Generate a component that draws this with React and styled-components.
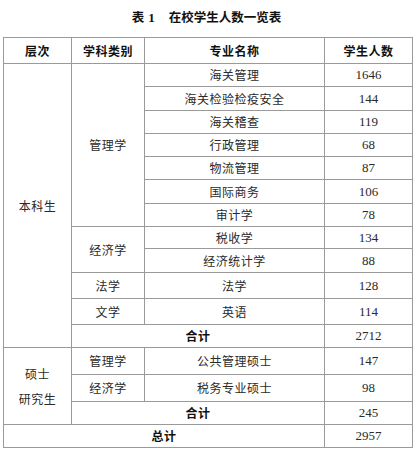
import React from "react";
import styled, { createGlobalStyle } from "styled-components";

const Global = createGlobalStyle`
  html, body { margin: 0; padding: 0; background: #fff; }
  body { font-family: "Noto Sans CJK SC", "Noto Sans", sans-serif; color: #222; }
`;

const Page = styled.div`
  width: 416px;
  padding: 0 0 0 3px;
  box-sizing: border-box;
`;

const Title = styled.div`
  height: 37px;
  line-height: 34px;
  text-align: center;
  font-size: 12.5px;
  font-weight: 700;
  color: #111;
  padding-right: 6px;
  box-sizing: border-box;
`;

const Num1 = styled.span`
  font-family: "Liberation Serif", serif;
  font-weight: 700;
  font-size: 13px;
  margin: 0 14px 0 4px;
`;

const Table = styled.table`
  border-collapse: collapse;
  table-layout: fixed;
  width: 409px;
  border: 1px solid #8c8c8c;
`;

const Row = styled.tr`
  height: ${(p) => p.$h}px;
`;

const Cell = styled.td`
  border: 1px solid #9a9a9a;
  padding: 0;
  text-align: center;
  vertical-align: middle;
  font-size: 12px;
  line-height: ${(p) => (p.$lh ? p.$lh : 14)}px;
  font-weight: ${(p) => (p.$bold ? 700 : 400)};
  color: ${(p) => (p.$bold ? "#111" : "#2a2a2a")};
  letter-spacing: 0.5px;
`;

const NumCell = styled(Cell)`
  font-family: "Liberation Serif", serif;
  font-size: 13px;
  letter-spacing: 0;
`;

const undergrad = [
  ["海关管理", "1646", 23],
  ["海关检验检疫安全", "144", 24],
  ["海关稽查", "119", 23],
  ["行政管理", "68", 23],
  ["物流管理", "87", 23],
  ["国际商务", "106", 24],
  ["审计学", "78", 23],
];

export default function App() {
  return (
    <Page>
      <Global />
      <Title>
        表<Num1>1</Num1>在校学生人数一览表
      </Title>
      <Table>
        <colgroup>
          <col style={{ width: 68 }} />
          <col style={{ width: 73 }} />
          <col style={{ width: 180 }} />
          <col style={{ width: 88 }} />
        </colgroup>
        <tbody>
          <Row $h={26}>
            <Cell $bold>层次</Cell>
            <Cell $bold>学科类别</Cell>
            <Cell $bold>专业名称</Cell>
            <Cell $bold>学生人数</Cell>
          </Row>
          {undergrad.map(([name, n, h], i) => (
            <Row $h={h} key={name}>
              {i === 0 && <Cell rowSpan={12}>本科生</Cell>}
              {i === 0 && <Cell rowSpan={7}>管理学</Cell>}
              <Cell>{name}</Cell>
              <NumCell>{n}</NumCell>
            </Row>
          ))}
          <Row $h={22}>
            <Cell rowSpan={2}>经济学</Cell>
            <Cell>税收学</Cell>
            <NumCell>134</NumCell>
          </Row>
          <Row $h={24}>
            <Cell>经济统计学</Cell>
            <NumCell>88</NumCell>
          </Row>
          <Row $h={26}>
            <Cell>法学</Cell>
            <Cell>法学</Cell>
            <NumCell>128</NumCell>
          </Row>
          <Row $h={26}>
            <Cell>文学</Cell>
            <Cell>英语</Cell>
            <NumCell>114</NumCell>
          </Row>
          <Row $h={23}>
            <Cell colSpan={2} $bold>合计</Cell>
            <NumCell>2712</NumCell>
          </Row>
          <Row $h={27}>
            <Cell rowSpan={3} $lh={25}>
              硕士
              <br />
              研究生
            </Cell>
            <Cell>管理学</Cell>
            <Cell>公共管理硕士</Cell>
            <NumCell>147</NumCell>
          </Row>
          <Row $h={27}>
            <Cell>经济学</Cell>
            <Cell>税务专业硕士</Cell>
            <NumCell>98</NumCell>
          </Row>
          <Row $h={23}>
            <Cell colSpan={2} $bold>合计</Cell>
            <NumCell>245</NumCell>
          </Row>
          <Row $h={23}>
            <Cell colSpan={3} $bold>总计</Cell>
            <NumCell>2957</NumCell>
          </Row>
        </tbody>
      </Table>
    </Page>
  );
}
